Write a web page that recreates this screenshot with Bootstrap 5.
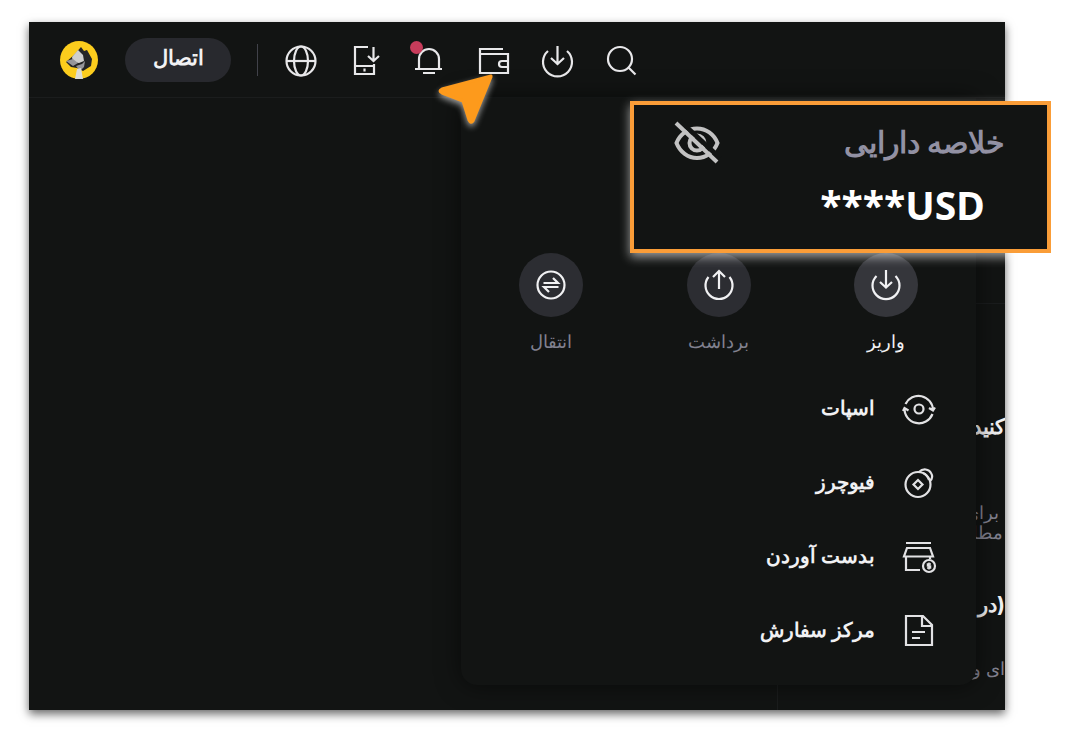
<!DOCTYPE html>
<html lang="fa">
<head>
<meta charset="utf-8">
<meta name="viewport" content="width=device-width, initial-scale=1">
<title>کیف پول</title>
<link rel="stylesheet" href="https://cdn.jsdelivr.net/npm/bootstrap@5.3.0/dist/css/bootstrap.min.css">
<style>
  body { background: #fff; font-family: Inter, sans-serif; padding: 22px 65px 26px 29px; }
  svg { display: block; overflow: visible; fill: none; stroke: currentColor; stroke-width: 2.2; }
  .shell { background: #121413; color: #f1f1f3; box-shadow: 0 4px 9px rgba(0,0,0,.6); }
  .topbar { height: 76px; padding-left: 31px; border-bottom: 1px solid #1b1d1d; }
  .plain-btn { display: block; background: none; border: 0; padding: 0; color: #e8e8ea; }
  .connect { width: 106px; height: 44px; margin: 0 26px 0 27px; border: 0; border-radius: 22px; background: #28292e; color: #f1f1f3; font-size: 21px; font-weight: 700; line-height: 32px; padding-bottom: 4px; }
  .rule { width: 1px; height: 32px; background: #41424a; margin-right: 28px; }
  .tools { gap: 32px; }
  .dot { position: absolute; left: -4px; top: -3px; width: 13px; height: 13px; border-radius: 50%; background: #c73c5b; }
  .pointer { position: absolute; left: -41px; top: 26px; z-index: 5; filter: drop-shadow(0 3px 3px rgba(255,255,255,.6)); }
  .stage { min-height: 612px; }
  .feed { width: 228px; border-left: 1px solid #1b1d1d; overflow: hidden; }
  .feed p { margin: 0; padding-right: 2px; white-space: nowrap; font-size: 18px; line-height: 20px; }
  .feed hr { margin: 205px 0 111px; border-color: #33353a; }
  .feed p.lead-line { font-size: 21px; line-height: 24px; font-weight: 700; padding-right: 0; }
  .feed .after-title { margin-top: 64px; padding-right: 6px; }
  .feed .after-text { margin-top: 50px; }
  .feed .last-line { margin-top: 42px; padding-right: 0; }
  .dim { color: #81818f; }
  .wallet-menu { position: absolute; top: 0; right: 29px; width: 515px; padding: 155px 6px 18px; background: #121413; border-radius: 0 0 16px 16px; box-shadow: 0 0 24px rgba(0,0,0,.55); }
  .circle { width: 64px; height: 64px; background: #2c2d32; }
  .action { color: #81818f; font-size: 18px; line-height: 24px; text-decoration: none; }
  .action.on { color: #f1f1f3; }
  .action .circle { color: #f1f1f3; margin-bottom: 13px; }
  .action.on .circle { background: #35363b; }
  .entries { padding-top: 17px; }
  .entry { height: 74px; gap: 28px; padding-right: 35px; color: #f1f1f3; font-size: 20px; font-weight: 700; line-height: 28px; text-decoration: none; }
  .entry svg { color: #e2e2e4; }
  .summary { position: absolute; top: 3px; right: -75px; width: 421px; height: 152px; padding: 16px 42px 0 40px; background: #121413; border: 4px solid #fa9d38; box-shadow: 0 4px 10px rgba(255,255,255,.6); }
  .summary h2 { margin: 0; font: 700 30px/44px "Liberation Serif", serif; color: #9291a3; }
  .eye { color: #c2c2c2; }
  .amount { margin: 16px 20px 0 0; font: 700 39px/48px "Open Sans", sans-serif; color: #fff; }
</style>
</head>
<body>
<div class="shell position-relative">
  <header class="topbar d-flex align-items-center">
    <svg width="38" height="38" viewBox="0 0 38 38" role="img" aria-label="آواتار">
      <g stroke="none">
        <circle cx="19" cy="19" r="19" fill="#fccd1d"/>
        <path d="M21 6l3 4 3-1 5 9-1 7-8 5-6-3-6-1-5-5 8-7z" fill="#242526"/>
        <path d="M18 9l5 5 1 6-5 2-6-1-1-5z" fill="#cfcfcd"/>
        <path d="M6 20l7-2 5 4-5 3zM16 25l6-2 3-3-1 6-4 4z" fill="#96969a"/>
        <path d="M17 28l4-1 2 11h-8z" fill="#dcdcd6"/>
      </g>
    </svg>
    <button class="connect" type="button">اتصال</button>
    <div class="rule"></div>
    <nav class="tools d-flex" aria-label="ابزارها">
      <button class="plain-btn" type="button" aria-label="زبان"><svg width="32" height="32" viewBox="0 0 32 32"><circle cx="15" cy="17" r="14.500"/><ellipse cx="15" cy="17" rx="7" ry="14.500"/><path d="M1 17h29"/></svg></button>
      <button class="plain-btn" type="button" aria-label="برنامه"><svg width="32" height="32" viewBox="0 0 32 32"><path d="M18 3H5v27h19V20M5 22h19M14.500 24.500v3M23.500 3v14M18 12l5.500 5 5.500-5"/></svg></button>
      <button class="plain-btn position-relative" type="button" aria-label="اعلان‌ها"><svg width="32" height="32" viewBox="0 0 32 32"><path d="M5 25V15a10 10 0 0 1 20 0v10M1 25h27M9 29h12"/></svg><span class="dot"></span></button>
      <div class="position-relative">
        <button class="plain-btn" type="button" aria-label="کیف پول"><svg width="32" height="32" viewBox="0 0 32 32"><path d="M25 5H2v24h28V10H2M30 17h-6a3 3 0 0 0 0 6h6"/></svg></button>
        <svg class="pointer" width="60" height="60" viewBox="0 0 60 60"><path d="M54 7L36 51Q34 54 32 50L26 31 5 23Q1 21 5 19L54 6Z" fill="#fd9a1c" stroke="#fd9a1c" stroke-width="3" stroke-linejoin="round"/></svg>
      </div>
      <button class="plain-btn" type="button" aria-label="واریز"><svg width="32" height="32" viewBox="0 0 32 32"><path d="M6 7a14.500 14.500 0 1 0 19 0M15.500 2v18M9 14l6.500 6 6.500-6"/></svg></button>
      <button class="plain-btn" type="button" aria-label="جستجو"><svg width="32" height="32" viewBox="0 0 32 32"><circle cx="14" cy="15" r="12"/><path d="M22.500 23.500l7 7"/></svg></button>
    </nav>
  </header>

  <div class="stage d-flex justify-content-end position-relative">
    <aside class="feed" dir="rtl">
      <hr>
      <p class="lead-line">کنید</p>
      <p class="dim after-title">برای</p>
      <p class="dim">مطلب</p>
      <p class="lead-line after-text">(در</p>
      <p class="dim last-line">ای و</p>
    </aside>

    <section class="wallet-menu">
      <div class="row g-0 text-center">
        <a class="action col" href="#"><span class="circle rounded-circle d-flex align-items-center justify-content-center mx-auto"><svg width="30" height="30" viewBox="0 0 30 30"><circle cx="15" cy="15" r="13.500"/><path d="M7.500 13H22l-5-5M22.500 17H8l5 5"/></svg></span>انتقال</a>
        <a class="action col" href="#"><span class="circle rounded-circle d-flex align-items-center justify-content-center mx-auto"><svg width="30" height="30" viewBox="0 0 30 30"><path d="M4.500 7a13.500 13.500 0 1 0 21 0M15 19V1M9 7l6-6 6 6"/></svg></span>برداشت</a>
        <a class="action on col" href="#"><span class="circle rounded-circle d-flex align-items-center justify-content-center mx-auto"><svg width="30" height="30" viewBox="0 0 30 30"><path d="M5.500 6a13.500 13.500 0 1 0 19 0M15 0v17M9 12l6 5.500 6-5.500"/></svg></span>واریز</a>
      </div>

      <nav class="entries d-flex flex-column" dir="rtl" aria-label="کیف پول">
        <a class="entry d-flex align-items-center" href="#"><svg width="32" height="32" viewBox="0 0 32 32"><circle cx="16" cy="17" r="4.500"/><path d="M2.500 12a14.500 14.500 0 0 1 27.500 6M29.500 22a14.500 14.500 0 0 1-28-6M26 16l4 2.500 2-3M0 19l1.500-3 4 2.500"/></svg><span>اسپات</span></a>
        <a class="entry d-flex align-items-center" href="#"><svg width="32" height="32" viewBox="0 0 32 32"><circle cx="15" cy="18.500" r="12.500"/><path d="M15 14l4.500 4.500L15 23l-4.500-4.500zM16 6c4-4 10-3 12 1 2 3 1 6-1 8M20 7c3 1 5 4 6 7"/></svg><span>فیوچرز</span></a>
        <a class="entry d-flex align-items-center" href="#"><svg width="32" height="32" viewBox="0 0 32 32"><path d="M3 3h25M4 8h23l3 8.500H1zM3 17v13h14M27 17v2"/><circle cx="26" cy="26" r="6"/><path d="M28 24h-3.500v2h3v2H24M26 22.500v7" stroke-width="1.500"/></svg><span>بدست آوردن</span></a>
        <a class="entry d-flex align-items-center" href="#"><svg width="32" height="32" viewBox="0 0 32 32"><path d="M3 2h17l9 9v20H3zM19 2v10h9M9 18h13M9 24h8"/></svg><span>مرکز سفارش</span></a>
      </nav>

      <div class="summary">
        <div class="d-flex justify-content-between align-items-center">
          <button class="plain-btn eye" type="button" aria-label="نمایش دارایی"><svg width="46" height="44" viewBox="0 0 46 44"><g stroke-width="4"><path d="M2.500 22C6 13 14 7.500 23 7.500S40 13 43.500 22C40 31 32 37 23 37S6 31 2.500 22z"/><circle cx="23" cy="22" r="7.500"/><path d="M6 0l40 37" stroke="#121413" stroke-width="5"/><path d="M2 2l41 39"/></g></svg></button>
          <h2 dir="rtl">خلاصه دارایی</h2>
        </div>
        <div class="amount text-end">****USD</div>
      </div>
    </section>
  </div>
</div>
<script src="https://cdn.jsdelivr.net/npm/bootstrap@5.3.0/dist/js/bootstrap.bundle.min.js"></script>
</body>
</html>
